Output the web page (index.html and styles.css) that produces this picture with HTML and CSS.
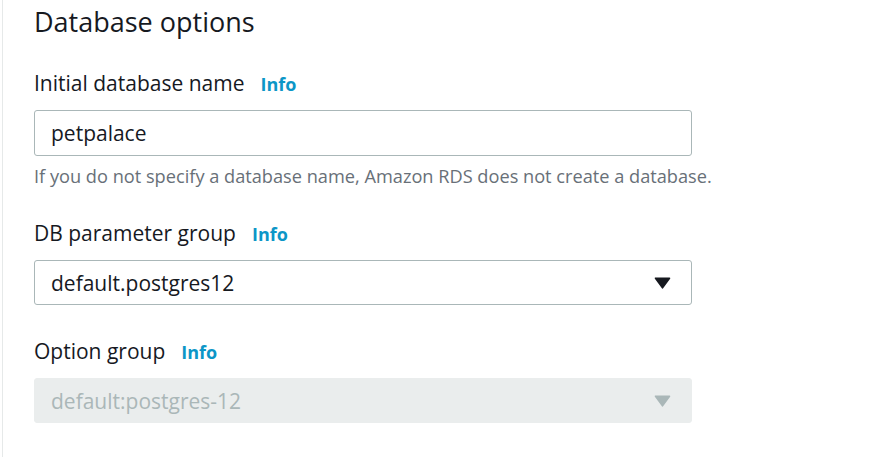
FILE: index.html
```html
<!DOCTYPE html>
<html lang="en">
<head>
<meta charset="utf-8">
<title>Database options</title>
<link rel="stylesheet" href="styles.css">
</head>
<body>
<div class="panel">
  <h2 class="title">Database options</h2>

  <div class="field">
    <div class="label">Initial database name <a class="info" href="#">Info</a></div>
    <div class="input">petpalace</div>
    <div class="hint">If you do not specify a database name, Amazon RDS does not create a database.</div>
  </div>

  <div class="field">
    <div class="label">DB parameter group <a class="info" href="#">Info</a></div>
    <div class="select">
      <span>default.postgres12</span>
      <svg class="caret" width="17" height="12" viewBox="0 0 17 12"><path d="M1.5 1.2h14L8.5 10.8z" fill="currentColor" stroke="currentColor" stroke-width="1.6" stroke-linejoin="round"/></svg>
    </div>
  </div>

  <div class="field">
    <div class="label">Option group <a class="info" href="#">Info</a></div>
    <div class="select disabled">
      <span>default:postgres-12</span>
      <svg class="caret" width="17" height="12" viewBox="0 0 17 12"><path d="M1.5 1.2h14L8.5 10.8z" fill="currentColor" stroke="currentColor" stroke-width="1.6" stroke-linejoin="round"/></svg>
    </div>
  </div>
</div>
</body>
</html>
```

FILE: styles.css
```css
html, body {
  margin: 0;
  padding: 0;
  background: #ffffff;
}
body {
  font-family: "Open Sans", "Noto Sans", Arial, sans-serif;
  color: #16191f;
}
.panel {
  margin-left: 2px;
  border-left: 1px solid #e6e9e9;
  height: 457px;
  box-sizing: border-box;
  padding: 4px 0 0 31px;
  width: 690px;
}
.title {
  margin: 0;
  font-size: 27px;
  font-weight: 400;
  line-height: 36px;
}
.field {
  margin-top: 33px;
}
.title + .field {
  margin-top: 30px;
}
.label {
  font-size: 21px;
  line-height: 26px;
  display: flex;
  align-items: baseline;
  gap: 16px;
  white-space: nowrap;
}
.info {
  color: #0c96c7;
  font-weight: 700;
  font-size: 18px;
  text-decoration: none;
}
.input, .select {
  margin-top: 13px;
  height: 46px;
  box-sizing: border-box;
  border: 1px solid #aab7b8;
  border-radius: 3px;
  padding: 0 20px 0 16px;
  font-size: 21px;
  display: flex;
  align-items: center;
  justify-content: space-between;
  width: 658px;
}
.select {
  height: 45px;
}
.hint {
  margin-top: 9px;
  font-size: 18.2px;
  line-height: 22px;
  color: #687078;
  white-space: nowrap;
}
.caret {
  color: #16191f;
}
.select.disabled {
  background: #eaeded;
  border-color: #eaeded;
  color: #aab7b8;
}
.select.disabled .caret {
  color: #aab7b8;
}
```
